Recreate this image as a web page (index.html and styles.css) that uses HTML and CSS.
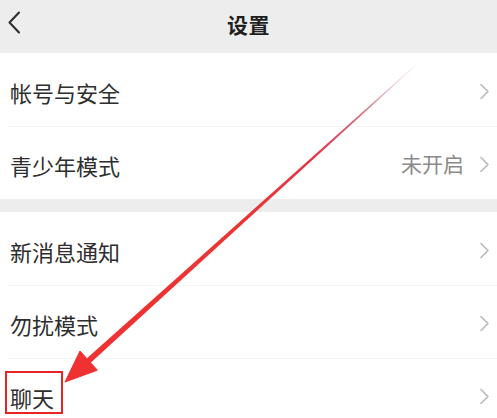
FILE: index.html
```html
<!DOCTYPE html>
<html lang="zh-CN">
<head>
<meta charset="utf-8">
<title>设置</title>
<link rel="stylesheet" href="styles.css">
</head>
<body>
<div class="screen">
  <header class="topbar">
    <svg class="back" width="14" height="23" viewBox="0 0 14 23"><polyline points="12,1.5 2.5,11.5 12,21.5" fill="none" stroke="#2f2f2f" stroke-width="2.1" stroke-linejoin="round" stroke-linecap="round"/></svg>
    <h1 class="title">设置</h1>
  </header>
  <section class="group">
    <div class="row"><span class="label">帐号与安全</span><span class="right"><svg class="chev" width="11" height="17" viewBox="0 0 11 17"><polyline points="2,1.5 9,8.5 2,15.5" fill="none" stroke="#b9b9b9" stroke-width="1.6" stroke-linejoin="round" stroke-linecap="round"/></svg></span></div>
    <div class="row"><span class="label">青少年模式</span><span class="right"><span class="value">未开启</span><svg class="chev" width="11" height="17" viewBox="0 0 11 17"><polyline points="2,1.5 9,8.5 2,15.5" fill="none" stroke="#b9b9b9" stroke-width="1.6" stroke-linejoin="round" stroke-linecap="round"/></svg></span></div>
  </section>
  <section class="group">
    <div class="row"><span class="label">新消息通知</span><span class="right"><svg class="chev" width="11" height="17" viewBox="0 0 11 17"><polyline points="2,1.5 9,8.5 2,15.5" fill="none" stroke="#b9b9b9" stroke-width="1.6" stroke-linejoin="round" stroke-linecap="round"/></svg></span></div>
    <div class="row"><span class="label">勿扰模式</span><span class="right"><svg class="chev" width="11" height="17" viewBox="0 0 11 17"><polyline points="2,1.5 9,8.5 2,15.5" fill="none" stroke="#b9b9b9" stroke-width="1.6" stroke-linejoin="round" stroke-linecap="round"/></svg></span></div>
    <div class="row"><span class="label">聊天</span><span class="right"><svg class="chev" width="11" height="17" viewBox="0 0 11 17"><polyline points="2,1.5 9,8.5 2,15.5" fill="none" stroke="#b9b9b9" stroke-width="1.6" stroke-linejoin="round" stroke-linecap="round"/></svg></span></div>
  </section>
  <svg class="annotation" width="497" height="418" viewBox="0 0 497 418">
    <defs>
      <linearGradient id="fade" x1="418" y1="63" x2="88" y2="361" gradientUnits="userSpaceOnUse">
        <stop offset="0" stop-color="#ece8ea" stop-opacity="0.4"/>
        <stop offset="0.15" stop-color="#d27a88"/>
        <stop offset="0.3" stop-color="#e0384a"/>
        <stop offset="0.5" stop-color="#ec3434"/>
        <stop offset="1" stop-color="#ef3131"/>
      </linearGradient>
    </defs>
    <polygon points="418.3,63.3 417.7,62.7 86.7,358.4 90.7,362.8" fill="url(#fade)"/>
    <polygon points="65,382 80,351 97.4,370.2" fill="#ef3131" stroke="#ef3131" stroke-width="1" stroke-linejoin="round"/>
    <rect x="6" y="372" width="56" height="41" fill="none" stroke="#e82424" stroke-width="2"/>
  </svg>
</div>
</body>
</html>
```
FILE: styles.css
```css
html, body {
  margin: 0;
  padding: 0;
  background: #ededed;
}
.screen {
  position: relative;
  width: 497px;
  height: 418px;
  overflow: hidden;
  font-family: "Noto Sans CJK SC", "Noto Sans", sans-serif;
  background: #ededed;
}
.topbar {
  height: 53px;
  display: flex;
  align-items: center;
  justify-content: center;
  position: relative;
  background: #ededed;
}
.back {
  position: absolute;
  left: 7px;
  top: 11px;
}
.title {
  margin: 0 0 6px 0;
  font-size: 21px;
  font-weight: 600;
  color: #1f1f1f;
  letter-spacing: 0.5px;
}
.group {
  background: #ffffff;
  margin-bottom: 13px;
}
.row {
  height: 73px;
  display: flex;
  align-items: center;
  justify-content: space-between;
  padding-left: 10px;
  padding-right: 7px;
  box-sizing: border-box;
  position: relative;
}
.row + .row::before {
  content: "";
  position: absolute;
  left: 8px;
  right: 0;
  top: 0;
  height: 1px;
  background: #f5f5f5;
}
.label {
  font-size: 22px;
  color: #2e2e2e;
  line-height: 1;
  padding-top: 4px;
}
.right {
  display: flex;
  align-items: center;
}
.value {
  font-size: 21px;
  color: #8a8a8a;
  margin-right: 15px;
  line-height: 1;
  padding-top: 2px;
}
.chev {
  display: block;
  margin-top: 3px;
}
.annotation {
  position: absolute;
  left: 0;
  top: 0;
  pointer-events: none;
}
```
